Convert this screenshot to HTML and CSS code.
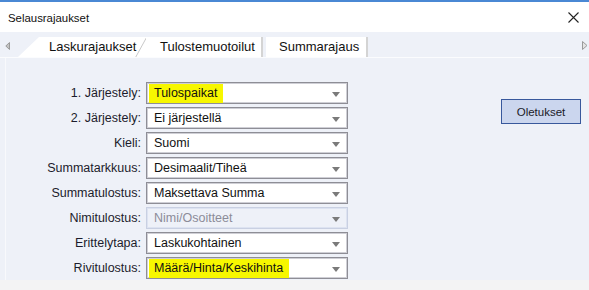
FILE: index.html
```html
<!DOCTYPE html>
<html lang="fi">
<head>
  <meta charset="UTF-8">
  <title>Selausrajaukset</title>
  <link rel="stylesheet" href="styles.css">
</head>
<body>
  <div class="window">
    <div class="titlebar">
      <span class="title">Selausrajaukset</span>
      <svg class="close" width="11" height="11" viewBox="0 0 11 11">
        <path d="M0.5 0.5 L10.5 10.5 M10.5 0.5 L0.5 10.5" stroke="#222" stroke-width="1.1" fill="none"/>
      </svg>
    </div>

    <div class="tabstrip">
      <svg class="scroll scroll-left" width="5" height="8" viewBox="0 0 5 8">
        <path d="M4.5 0.5 L0.8 4 L4.5 7.5 Z" fill="#c4c4c4" stroke="#9a9a9a" stroke-width="1"/>
      </svg>
      <div class="tabs">
        <div class="tab tab-first">
          Laskurajaukset
          <svg class="slant" width="12" height="21" viewBox="0 0 12 21">
            <path d="M0.5 20.5 L11.5 0.5" stroke="#c8c8c8" stroke-width="1" fill="none"/>
          </svg>
        </div>
        <div class="tab tab-second">Tulostemuotoilut</div>
        <div class="tab tab-third">Summarajaus</div>
      </div>
      <svg class="scroll scroll-right" width="6" height="9" viewBox="0 0 6 9">
        <path d="M0.5 0.5 L5 4.5 L0.5 8.5 Z" fill="#e4e4e4" stroke="#9a9a9a" stroke-width="1"/>
      </svg>
    </div>

    <div class="content">
      <div class="panel">
        <div class="form">
          <label class="label">1. Järjestely:</label>
          <div class="select"><span class="value"><span class="marker">Tulospaikat</span></span><span class="arrow"></span></div>

          <label class="label">2. Järjestely:</label>
          <div class="select"><span class="value">Ei järjestellä</span><span class="arrow"></span></div>

          <label class="label">Kieli:</label>
          <div class="select"><span class="value">Suomi</span><span class="arrow"></span></div>

          <label class="label">Summatarkkuus:</label>
          <div class="select"><span class="value">Desimaalit/Tiheä</span><span class="arrow"></span></div>

          <label class="label">Summatulostus:</label>
          <div class="select"><span class="value">Maksettava Summa</span><span class="arrow"></span></div>

          <label class="label">Nimitulostus:</label>
          <div class="select disabled"><span class="value">Nimi/Osoitteet</span><span class="arrow"></span></div>

          <label class="label">Erittelytapa:</label>
          <div class="select"><span class="value">Laskukohtainen</span><span class="arrow"></span></div>

          <label class="label">Rivitulostus:</label>
          <div class="select"><span class="value"><span class="marker">Määrä/Hinta/Keskihinta</span></span><span class="arrow"></span></div>
        </div>
        <div class="side">
          <button class="btn">Oletukset</button>
        </div>
      </div>
    </div>

    <div class="footer"></div>
  </div>
</body>
</html>
```

FILE: styles.css
```css
html, body {
  margin: 0;
  padding: 0;
}
body {
  width: 589px;
  height: 290px;
  overflow: hidden;
  background: #f3f3f4;
  font-family: "Liberation Sans", Arial, sans-serif;
  color: #1c1c28;
}
.window {
  display: flex;
  flex-direction: column;
  height: 290px;
}

/* otsikkopalkki */
.titlebar {
  height: 30px;
  border-top: 2px solid #4a88d4;
  background: #fff;
  display: flex;
  align-items: center;
  justify-content: space-between;
  padding: 0 10px 0 8px;
}
.title {
  font-size: 11.4px;
  color: #111;
  margin-top: 1px;
}
.close {
  display: block;
  margin-top: 1px;
}

/* välilehdet */
.tabstrip {
  height: 25px;
  background: #eef1f8;
  display: flex;
  align-items: flex-end;
}
.scroll {
  display: block;
  align-self: center;
  margin-top: 2px;
}
.scroll-left {
  margin-left: 5px;
  margin-right: 8px;
}
.scroll-right {
  margin-left: auto;
  margin-right: 1px;
}
.tabs {
  display: flex;
  height: 20px;
}
.tab {
  position: relative;
  background: #fff;
  font-size: 13px;
  line-height: 20px;
  color: #111;
  box-sizing: border-box;
}
.tab-first {
  width: 128px;
  padding-left: 31px;
  clip-path: polygon(0 100%, 21px 0, 100% 0, 100% 100%);
}
.slant {
  position: absolute;
  right: -1px;
  top: 0;
}
.tab-second {
  width: 117px;
  padding-left: 14px;
  border-right: 2px solid #d4d4d4;
}
.tab-third {
  width: 102px;
  margin-left: 3px;
  padding-left: 13px;
  border-right: 2px solid #d4d4d4;
}

/* sisältö */
.content {
  height: 222px;
  background: #eef1f8;
  border-top: 1px solid #fbfcfe;
  padding-left: 5px;
}
.panel {
  height: 100%;
  box-sizing: border-box;
  border-left: 1px solid #f8f9fc;
  padding-top: 24px;
  display: flex;
}
.form {
  display: grid;
  grid-template-columns: 135px 202px;
  column-gap: 5px;
  row-gap: 3px;
  grid-auto-rows: 22px;
}
.label {
  font-size: 12.5px;
  text-align: right;
  line-height: 22px;
  color: #1c1c2c;
}
.select {
  display: flex;
  align-items: center;
  background: #fff;
  border: 1px solid #8e8e96;
  box-shadow: inset 0 0 0 1px #cfcfd6;
  padding: 0 7px 0 7px;
  font-size: 12.5px;
  color: #111;
}
.select .value {
  flex: 1;
  white-space: nowrap;
}
.marker {
  background: #f7f700;
  margin-left: -5px;
  padding: 2px 6px 3px 5px;
}
.arrow {
  width: 0;
  height: 0;
  border-top: 5px solid #7a7a7a;
  border-left: 4px solid transparent;
  border-right: 4px solid transparent;
  margin-top: 2px;
}
.select.disabled {
  background: #eef1f8;
  border-color: #c9d0e2;
  box-shadow: inset 0 0 0 1px #dde3f1;
  color: #8c8c98;
}

.side {
  padding-top: 17px;
  margin-left: 153px;
}
.btn {
  display: block;
  width: 80px;
  height: 25px;
  background: #cbd6ee;
  border: 1px solid #38589c;
  font-family: "Liberation Sans", Arial, sans-serif;
  font-size: 11.5px;
  color: #1a1a28;
  padding: 0;
  cursor: pointer;
}

.footer {
  height: 10px;
  background: #f3f3f4;
}
```
